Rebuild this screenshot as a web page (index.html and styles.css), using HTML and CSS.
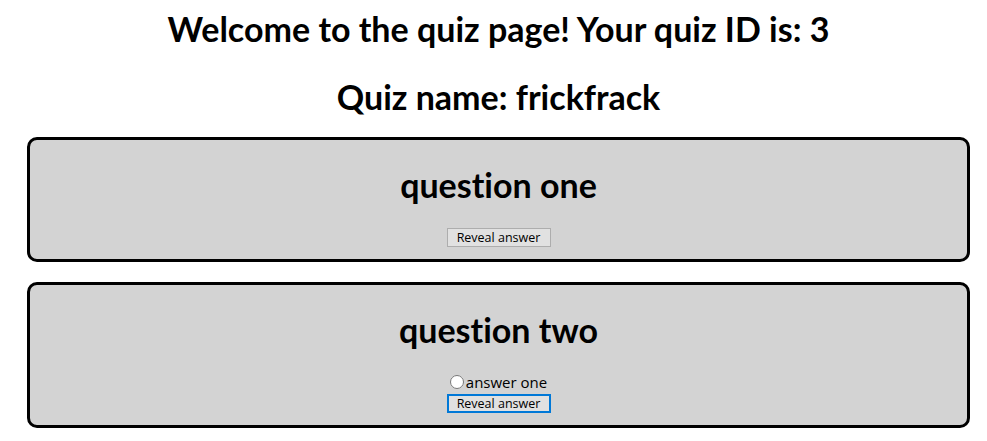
FILE: index.html
```html
<!DOCTYPE html>
<html>
<head>
<meta charset="utf-8">
<link rel="stylesheet" href="styles.css">
</head>
<body>
<div class="page">
  <h1 class="title">Welcome to the quiz page! Your quiz ID is: 3</h1>
  <h1 class="title name">Quiz name: frickfrack</h1>
  <div class="card">
    <h2 class="question">question one</h2>
    <button class="reveal">Reveal answer</button>
  </div>
  <div class="card">
    <h2 class="question">question two</h2>
    <label class="answer"><input type="radio" class="radio" name="q2"><span>answer one</span></label>
    <button class="reveal focused">Reveal answer</button>
  </div>
</div>
</body>
</html>
```
FILE: styles.css
```css
html, body {
  margin: 0;
  padding: 0;
  background: #ffffff;
  overflow: hidden;
}
body {
  font-family: "Lato", "Open Sans", sans-serif;
  color: #000;
  font-variant-ligatures: none;
}
.page {
  padding: 7px 8px 0 18px;
  display: flex;
  flex-direction: column;
}
.title {
  margin: 0;
  font-size: 34px;
  line-height: 44px;
  font-weight: 700;
  text-align: center;
}
.name {
  margin-top: 24px;
}
.card {
  margin: 18px 9px 0;
  background: #d3d3d3;
  border: 3px solid #000;
  border-radius: 10px;
  display: flex;
  flex-direction: column;
  align-items: center;
  padding-bottom: 12px;
}
.card + .card {
  margin-top: 20px;
}
.question {
  margin: 23px 0 21px;
  font-size: 34px;
  line-height: 44px;
  font-weight: 700;
}
.answer {
  display: flex;
  align-items: center;
  font-family: "Open Sans", sans-serif;
  font-size: 15px;
  line-height: 18px;
  height: 18px;
  margin-bottom: 3px;
}
.radio {
  width: 14px;
  height: 14px;
  margin: 0 2px 0 0;
}
.reveal {
  font-family: "Open Sans", sans-serif;
  font-size: 12.5px;
  line-height: 15px;
  padding: 1px 6px;
  background: #e1e1e1;
  border: 1px solid #adadad;
  border-radius: 0;
  color: #000;
  width: 104px;
  height: 19px;
}
.focused {
  border: 2px solid #0078d7;
  padding: 0 5px;
}
```
